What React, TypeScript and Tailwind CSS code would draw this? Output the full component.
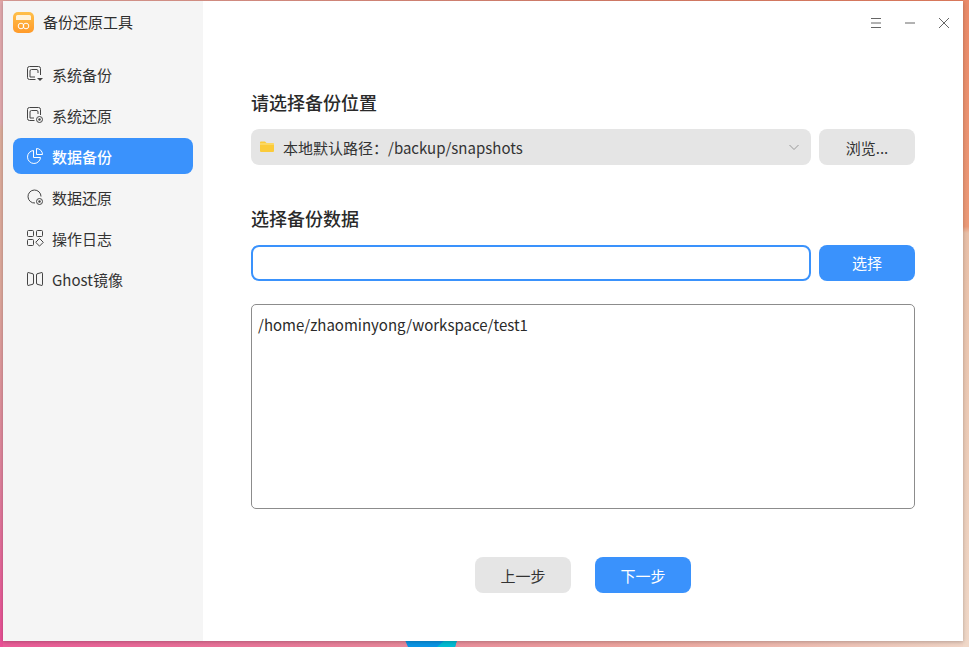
const FONT = "font-['Noto_Sans_CJK_SC','Noto_Sans',sans-serif]";

function IconSystemBackup() {
  return (
    <svg width="18" height="18" viewBox="0 0 18 18" fill="none" stroke="#444" strokeWidth="1">
      <path d="M9.5 14.5H3.5a2 2 0 0 1-2-2V3.5a2 2 0 0 1 2-2h9a2 2 0 0 1 2 2V10" />
      <path d="M4 12V6a1.5 1.5 0 0 1 1.5-1.5h5.500A1.500 1.500 0 0 1 12 6v2" />
      <path d="M4 12h5" />
      <path d="M11 13h6l-3 3z" fill="#444" stroke="none" />
    </svg>
  );
}

function IconSystemRestore() {
  return (
    <svg width="18" height="18" viewBox="0 0 18 18" fill="none" stroke="#444" strokeWidth="1">
      <path d="M8.5 14.5H3.5a2 2 0 0 1-2-2V3.5a2 2 0 0 1 2-2h9a2 2 0 0 1 2 2V9" />
      <path d="M4 12V6a1.5 1.5 0 0 1 1.5-1.5h5.500A1.500 1.500 0 0 1 12 6v2" />
      <path d="M4 12h4" />
      <circle cx="13.5" cy="13.5" r="3" />
      <circle cx="13.5" cy="13.5" r="1.2" fill="#444" stroke="none" />
    </svg>
  );
}

function IconPie() {
  return (
    <svg width="18" height="18" viewBox="0 0 18 18" fill="none" stroke="#fff" strokeWidth="1">
      <path d="M7.5 3.5a6.5 6.5 0 1 0 7 7h-7z" />
      <path d="M10.5 1.5a6 6 0 0 1 6 6h-6z" />
    </svg>
  );
}

function IconDataRestore() {
  return (
    <svg width="18" height="18" viewBox="0 0 18 18" fill="none" stroke="#444" strokeWidth="1">
      <path d="M9 15A6.5 6.5 0 1 1 15 8.5" />
      <circle cx="13.5" cy="13.5" r="3" />
      <circle cx="13.5" cy="13.5" r="1.2" fill="#444" stroke="none" />
    </svg>
  );
}

function IconLog() {
  return (
    <svg width="18" height="18" viewBox="0 0 18 18" fill="none" stroke="#444" strokeWidth="1">
      <rect x="1.5" y="1.5" width="6" height="6" rx="1" />
      <rect x="10.5" y="1.5" width="6" height="6" rx="1" />
      <rect x="1.5" y="10.5" width="6" height="6" rx="1" />
      <path d="M13.5 9.5l3.8 3.8-3.8 3.8-3.8-3.8z" />
    </svg>
  );
}

function IconGhost() {
  return (
    <svg width="18" height="18" viewBox="0 0 18 18" fill="none" stroke="#444" strokeWidth="1">
      <path d="M2 2.5l4 1a1.5 1.5 0 0 1 1.5 1.5v8a1.5 1.5 0 0 1-1.5 1.5l-4 1a.8.8 0 0 1-.5-.8V3.3a.8.8 0 0 1 .5-.8z" />
      <path d="M16 2.5l-4 1A1.5 1.5 0 0 0 10.5 5v8a1.5 1.5 0 0 0 1.5 1.5l4 1a.8.8 0 0 0 .5-.8V3.3a.8.8 0 0 0-.5-.8z" />
    </svg>
  );
}

function AppLogo() {
  return (
    <svg width="21" height="21" viewBox="0 0 21 21">
      <defs>
        <linearGradient id="logo" x1="0" y1="0" x2="0" y2="1">
          <stop offset="0" stopColor="#ffc04a" />
          <stop offset="1" stopColor="#ff9a2a" />
        </linearGradient>
      </defs>
      <rect width="21" height="21" rx="5" fill="url(#logo)" />
      <path d="M3 8V4.5A1.5 1.5 0 0 1 4.5 3h12A1.5 1.5 0 0 1 18 4.5V8z" fill="#fff3dc" />
      <circle cx="8" cy="14" r="2.8" fill="none" stroke="#fff" strokeWidth="1" />
      <circle cx="13" cy="14" r="2.8" fill="none" stroke="#fff" strokeWidth="1" />
    </svg>
  );
}

const navItems = [
  { label: "系统备份", icon: <IconSystemBackup /> },
  { label: "系统还原", icon: <IconSystemRestore /> },
  { label: "数据备份", icon: <IconPie />, active: true },
  { label: "数据还原", icon: <IconDataRestore /> },
  { label: "操作日志", icon: <IconLog /> },
  { label: "Ghost镜像", icon: <IconGhost /> },
];

export default function App() {
  return (
    <div className={`${FONT} relative w-[969px] h-[647px] overflow-hidden pt-px pl-[3px] bg-[linear-gradient(100deg,#ea4f96_0%,#e8849a_45%,#eda79f_70%,#f0d5c6_100%)]`}>
      {/* wallpaper */}
      <div className="absolute inset-y-0 left-0 w-[3px] bg-[linear-gradient(180deg,#e3a9ad_0%,#e3a9ad_19%,#dfae9c_20%,#dfa89c_45%,#e07f9c_75%,#ea4f96_100%)]" />
      <div className="absolute inset-x-0 top-0 h-px bg-[linear-gradient(90deg,#dfa09a,#d9806c_60%,#e67f60)]" />
      <div className="absolute right-0 inset-y-0 w-[6px] bg-[linear-gradient(180deg,#ea8a68_0%,#ec9a78_35%,#e9c0a8_36%,#f0d8c8_100%)]" />
      <svg className="absolute left-[405px] top-[640px]" width="52" height="7" viewBox="0 0 52 7">
        <path d="M0 0H52L50 7H3z" fill="#0a94e4" />
        <path d="M40 0H52L50 7H32z" fill="#00bcd4" />
      </svg>

      {/* Window */}
      <div className="relative flex w-[960px] h-[640px] bg-white shadow-[0_1px_4px_rgba(0,0,0,0.25)]">
        {/* Sidebar */}
        <div className="w-[200px] shrink-0 bg-[#f5f5f5]">
          <div className="flex items-center gap-[9px] h-[42px] pl-[10px] text-[15px] text-[#2e2e2e]">
            <AppLogo />
            备份还原工具
          </div>
          <nav className="flex flex-col gap-[5px] mt-[13px] px-[10px]">
            {navItems.map((item) => (
              <div
                key={item.label}
                className={`flex items-center gap-[8px] h-[36px] pl-[13px] rounded-lg text-[15px] ${
                  item.active ? "bg-[#3a92fc] text-white font-medium" : "text-[#333]"
                }`}
              >
                {item.icon}
                <span className="pt-[2px]">{item.label}</span>
              </div>
            ))}
          </nav>
        </div>

        {/* Main Content */}
        <div className="relative flex-1 flex flex-col px-[48px]">
          <div className="absolute right-[11px] top-[14px] flex items-center gap-[18px]">
            <svg width="16" height="16" viewBox="0 0 16 16" stroke="#666" strokeWidth="1"><path d="M3 3.5h10M3 8h10M3 12.5h10" /></svg>
            <svg width="16" height="16" viewBox="0 0 16 16" stroke="#666" strokeWidth="1"><path d="M3 8h10" /></svg>
            <svg width="16" height="16" viewBox="0 0 16 16" stroke="#666" strokeWidth="1"><path d="M3 3l10 10M13 3L3 13" /></svg>
          </div>

          <h2 className="mt-[89px] text-lg font-medium leading-[24px] text-[#2a2a2a]">请选择备份位置</h2>
          <div className="flex gap-[8px] mt-[15px]">
            <div className="flex flex-1 items-center h-[36px] rounded-lg bg-[#e5e5e5] pl-[8px] pr-[11px] text-[15px] text-[#333]">
              <svg width="16" height="16" viewBox="0 0 16 16" className="mr-[8px]">
                <path d="M1 3.5A1 1 0 0 1 2 2.5h4l1.5 1.5H14a1 1 0 0 1 1 1v7a1 1 0 0 1-1 1H2a1 1 0 0 1-1-1z" fill="#fbcb3a" />
                <path d="M1 5h14" stroke="#fde58a" />
              </svg>
              <span className="flex-1 pt-[2px]">本地默认路径：/backup/snapshots</span>
              <svg width="12" height="12" viewBox="0 0 12 12" fill="none" stroke="#999" strokeWidth="1"><path d="M1.5 4L6 8.500 10.500 4" /></svg>
            </div>
            <button className="w-[96px] h-[36px] pt-[2px] rounded-lg bg-[#e5e5e5] text-[15px] text-[#333]">浏览...</button>
          </div>

          <h2 className="mt-[41px] text-lg font-medium leading-[24px] text-[#2a2a2a]">选择备份数据</h2>
          <div className="flex gap-[8px] mt-[15px]">
            <div className="flex-1 h-[36px] rounded-lg border-2 border-[#3a92fc] bg-white" />
            <button className="w-[96px] h-[36px] rounded-lg bg-[#3a92fc] text-[15px] text-white">选择</button>
          </div>

          <div className="mt-[23px] h-[205px] rounded-[5px] border border-[#8c8c8c] px-[6px] pt-[8px] text-[15px] leading-[24px] text-[#2a2a2a]">
            /home/zhaominyong/workspace/test1
          </div>

          <div className="flex justify-center gap-[24px] mt-[48px]">
            <button className="w-[96px] h-[36px] pt-[2px] rounded-lg bg-[#e5e5e5] text-[15px] text-[#333]">上一步</button>
            <button className="w-[96px] h-[36px] pt-[2px] rounded-lg bg-[#3a92fc] text-[15px] text-white">下一步</button>
          </div>
        </div>
      </div>
    </div>
  );
}
